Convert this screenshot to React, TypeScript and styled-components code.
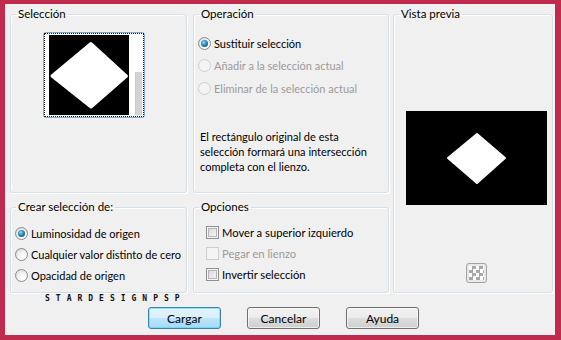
import React from "react";
import styled, { createGlobalStyle } from "styled-components";

const Global = createGlobalStyle`
  html, body { margin: 0; padding: 0; background: #c02a4c; }
  body { font-family: "Lato", "Noto Sans", sans-serif; }
`;

const Frame = styled.div`
  width: 561px;
  height: 340px;
  box-sizing: border-box;
  background: #c02a4c;
  padding: 4px 6px 5px 5px;
`;

const Dialog = styled.div`
  position: relative;
  height: 100%;
  box-sizing: border-box;
  background: #f0f0f0;
  padding: 3px 0 0 5px;
  font-family: "Lato", "Noto Sans", sans-serif;
  font-size: 11px;
  color: #000;
`;

const Grid = styled.div`
  display: grid;
  grid-template-columns: 177px 202px 164px;
  grid-template-rows: 186px 93px;
  row-gap: 7px;
`;

const Group = styled.fieldset<{ $col: number; $row: string; $ml?: number }>`
  grid-column: ${(p) => p.$col};
  grid-row: ${(p) => p.$row};
  margin: 0 0 0 ${(p) => p.$ml ?? 0}px;
  padding: 0;
  min-width: 0;
  border: 1px solid #d5dfe5;
  border-radius: 3px;
  box-shadow: inset 1px 1px 0 #fff, 1px 1px 0 #fff;
  display: flex;
  flex-direction: column;
`;

const Legend = styled.legend`
  margin-left: 5px;
  padding: 0 2px;
  font-size: 11.5px;
  line-height: 14px;
  color: #000;
`;

const ThumbWrap = styled.div`
  margin: 11px 0 0 32px;
  width: 102px;
  height: 86px;
  box-sizing: border-box;
  border: 1px solid #7fa9d9;
  border-radius: 3px;
`;

const ThumbInner = styled.div`
  height: 100%;
  box-sizing: border-box;
  border: 1px dotted #1a1a1a;
  background: #fff;
  display: flex;
  padding: 1px 1px 1px 4px;
`;

const BlackBox = styled.div<{ $w: number; $h: number }>`
  width: ${(p) => p.$w}px;
  height: ${(p) => p.$h}px;
  background: #000;
  flex: none;
  display: flex;
`;

const ScrollTrack = styled.div`
  margin-left: 6px;
  width: 7px;
  display: flex;
  flex-direction: column;
  justify-content: flex-end;
`;

const ScrollThumb = styled.div`
  height: 43px;
  background: #d3d3d3;
  border-left: 1px solid #c8c8c8;
`;

const Options = styled.div<{ $mt: number; $ml: number; $gap: number }>`
  margin: ${(p) => p.$mt}px 0 0 ${(p) => p.$ml}px;
  display: flex;
  flex-direction: column;
  gap: ${(p) => p.$gap}px;
`;

const Row = styled.label<{ $disabled?: boolean; $gap?: number }>`
  display: flex;
  align-items: center;
  gap: ${(p) => p.$gap ?? 3}px;
  height: 16px;
  white-space: nowrap;
  color: ${(p) => (p.$disabled ? "#9b9b9b" : "#000")};
`;

const Radio = styled.span<{ $checked?: boolean; $disabled?: boolean }>`
  width: 13px;
  height: 13px;
  flex: none;
  box-sizing: border-box;
  border-radius: 50%;
  border: 1px solid ${(p) => (p.$disabled ? "#cfcfcf" : "#8b8b8b")};
  background: ${(p) =>
    p.$disabled
      ? "#f4f4f4"
      : "radial-gradient(circle at 65% 70%, #ffffff 0%, #f3f3f3 45%, #d0d0d0 100%)"};
  display: flex;
  align-items: center;
  justify-content: center;
  &::after {
    content: "";
    display: ${(p) => (p.$checked ? "block" : "none")};
    width: 7px;
    height: 7px;
    border-radius: 50%;
    background: radial-gradient(circle at 40% 35%, #8fe0f5 0%, #2a86b8 45%, #0e3d68 100%);
  }
`;

const Check = styled.span<{ $disabled?: boolean }>`
  width: 13px;
  height: 13px;
  flex: none;
  box-sizing: border-box;
  border: 1px solid ${(p) => (p.$disabled ? "#cdcdcd" : "#8f8f8f")};
  background: ${(p) =>
    p.$disabled ? "#f4f4f4" : "linear-gradient(135deg, #d2d2d2 0%, #f4f4f4 80%)"};
  box-shadow: inset 0 0 0 1px ${(p) => (p.$disabled ? "#f4f4f4" : "#f7f7f7")},
    inset 0 0 0 2px ${(p) => (p.$disabled ? "#f4f4f4" : "#b5b5b5")};
`;

const CheckLabel = styled.span`
  font-size: 11.2px;
`;

const Note = styled.p`
  margin: 33px 0 0 6px;
  line-height: 15px;
  width: 175px;
`;

const PreviewBox = styled.div`
  margin: 90px 0 0 12px;
`;

const CheckerButton = styled.div`
  margin: 58px 0 0 72px;
  width: 21px;
  height: 20px;
  box-sizing: border-box;
  border: 1px solid #a3a3a3;
  border-radius: 3px;
  background: #e9e9e9;
  display: flex;
  align-items: center;
  justify-content: center;
`;

const Checker = styled.div`
  width: 15px;
  height: 14px;
  background-color: #ffffff;
  background-image: conic-gradient(#a9a9a9 25%, #ffffff 0 50%, #a9a9a9 0 75%, #ffffff 0);
  background-size: 7px 7px;
`;

const Buttons = styled.div`
  display: flex;
  gap: 26px;
  margin: 14px 0 0 138px;
`;

const Button = styled.button<{ $primary?: boolean }>`
  width: 73px;
  height: 22px;
  box-sizing: border-box;
  padding: 0;
  font-family: "Lato", "Noto Sans", sans-serif;
  font-size: 12px;
  color: #000;
  border-radius: 3px;
  border: 1px solid ${(p) => (p.$primary ? "#3c7fb1" : "#707070")};
  background: ${(p) =>
    p.$primary
      ? "linear-gradient(#e5f4fc 0%, #d7effc 50%, #bde6fd 50%, #a6d9f4 100%)"
      : "linear-gradient(#f2f2f2 0%, #ebebeb 50%, #dddddd 50%, #cfcfcf 100%)"};
  box-shadow: inset 0 0 0 1px ${(p) => (p.$primary ? "#48d7fb88" : "#fcfcfcaa")};
`;

const Watermark = styled.div`
  position: absolute;
  left: 40px;
  top: 291px;
  font-family: "DejaVu Sans Mono", monospace;
  font-size: 8px;
  font-weight: bold;
  letter-spacing: 6px;
  line-height: 8px;
  color: #111;
`;

export default function App() {
  return (
    <Frame>
      <Global />
      <Dialog>
        <Grid>
          <Group $col={1} $row="1">
            <Legend>Selección</Legend>
            <ThumbWrap>
              <ThumbInner>
                <BlackBox $w={80} $h={80}>
                  <svg width="80" height="80" viewBox="0 0 80 80">
                    <polygon
                      points="3,41 42,8.5 77.5,41 42,72"
                      fill="#fff"
                      stroke="#fff"
                      strokeWidth="3"
                      strokeLinejoin="round"
                    />
                  </svg>
                </BlackBox>
                <ScrollTrack>
                  <ScrollThumb />
                </ScrollTrack>
              </ThumbInner>
            </ThumbWrap>
          </Group>

          <Group $col={2} $row="1" $ml={6}>
            <Legend>Operación</Legend>
            <Options $mt={14} $ml={4} $gap={6.5}>
              <Row>
                <Radio $checked />
                Sustituir selección
              </Row>
              <Row $disabled>
                <Radio $disabled />
                Añadir a la selección actual
              </Row>
              <Row $disabled>
                <Radio $disabled />
                Eliminar de la selección actual
              </Row>
            </Options>
            <Note>
              El rectángulo original de esta selección formará una intersección completa con el lienzo.
            </Note>
          </Group>

          <Group $col={3} $row="1 / span 2" $ml={4}>
            <Legend>Vista previa</Legend>
            <PreviewBox>
              <BlackBox $w={141} $h={94}>
                <svg width="141" height="94" viewBox="0 0 141 94">
                  <polygon
                    points="42,47 71,23 99,47 71,72"
                    fill="#fff"
                    stroke="#fff"
                    strokeWidth="2"
                    strokeLinejoin="round"
                  />
                </svg>
              </BlackBox>
            </PreviewBox>
            <CheckerButton>
              <Checker />
            </CheckerButton>
          </Group>

          <Group $col={1} $row="2">
            <Legend>Crear selección de:</Legend>
            <Options $mt={11} $ml={4} $gap={5}>
              <Row>
                <Radio $checked />
                Luminosidad de origen
              </Row>
              <Row>
                <Radio />
                Cualquier valor distinto de cero
              </Row>
              <Row>
                <Radio />
                Opacidad de origen
              </Row>
            </Options>
          </Group>

          <Group $col={2} $row="2" $ml={6}>
            <Legend>Opciones</Legend>
            <Options $mt={10} $ml={12} $gap={5}>
              <Row>
                <Check />
                <CheckLabel>Mover a superior izquierdo</CheckLabel>
              </Row>
              <Row $disabled>
                <Check $disabled />
                <CheckLabel>Pegar en lienzo</CheckLabel>
              </Row>
              <Row>
                <Check />
                <CheckLabel>Invertir selección</CheckLabel>
              </Row>
            </Options>
          </Group>
        </Grid>
        <Watermark>STARDESIGNPSP</Watermark>
        <Buttons>
          <Button $primary>Cargar</Button>
          <Button>Cancelar</Button>
          <Button>Ayuda</Button>
        </Buttons>
      </Dialog>
    </Frame>
  );
}
